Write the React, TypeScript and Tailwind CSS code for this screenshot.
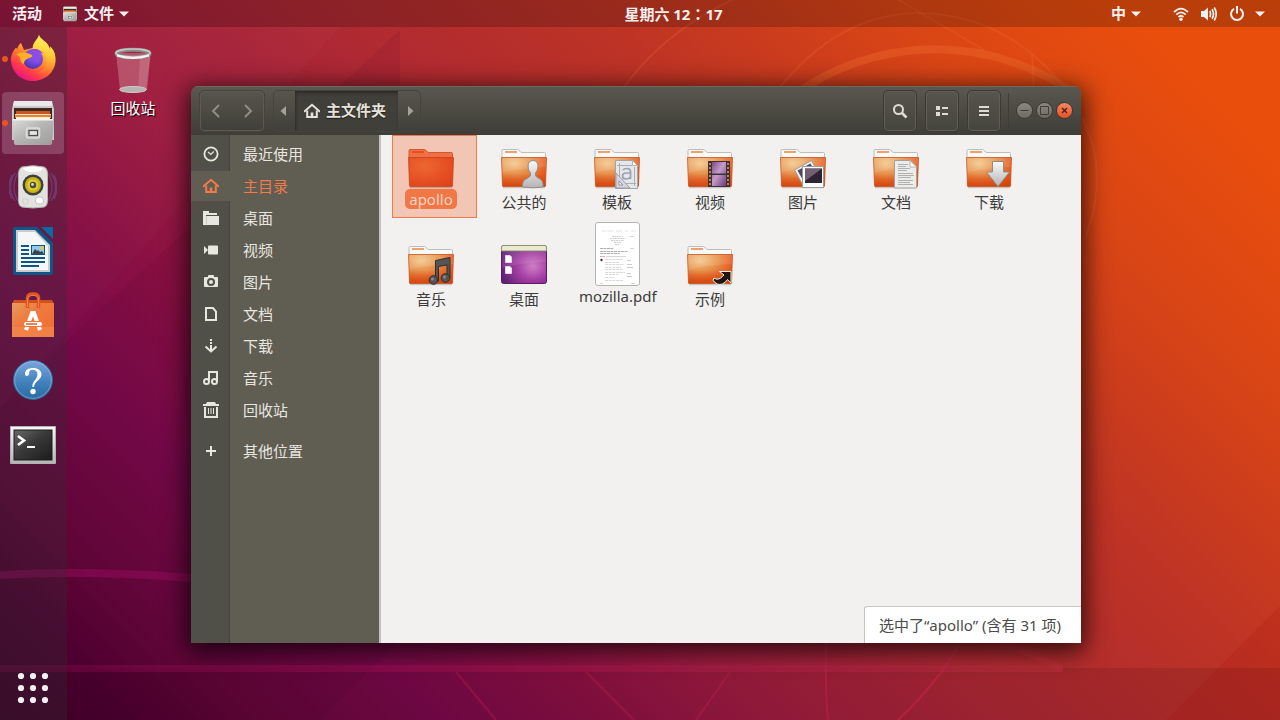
import type { ReactNode } from "react";

const FONT = "font-['Noto_Sans','Noto_Sans_CJK_SC',sans-serif]";

function SharedDefs() {
  return (
    <svg className="absolute size-0" aria-hidden="true">
      <defs>
        <radialGradient id="folderFront" cx="0.28" cy="0.22" r="0.95">
          <stop offset="0" stopColor="#f5d096" />
          <stop offset="0.4" stopColor="#e89a52" />
          <stop offset="0.72" stopColor="#e9662d" />
          <stop offset="1" stopColor="#d9480f" />
        </radialGradient>
        <linearGradient id="folderShade" x1="0" y1="0" x2="0" y2="1">
          <stop offset="0" stopColor="#d9480f" stopOpacity="0" />
          <stop offset="0.55" stopColor="#d9480f" stopOpacity="0.15" />
          <stop offset="1" stopColor="#cf430c" stopOpacity="0.8" />
        </linearGradient>
        <radialGradient id="folderSelected" cx="0.35" cy="0.3" r="0.9">
          <stop offset="0" stopColor="#ec6732" />
          <stop offset="0.5" stopColor="#e75225" />
          <stop offset="1" stopColor="#dd3f17" />
        </radialGradient>
        <linearGradient id="silver" x1="0" y1="0" x2="0" y2="1">
          <stop offset="0" stopColor="#fafafa" />
          <stop offset="1" stopColor="#b4b4b4" />
        </linearGradient>
        <linearGradient id="cabinet" x1="0" y1="0" x2="1" y2="1">
          <stop offset="0" stopColor="#dcdcda" />
          <stop offset="0.5" stopColor="#b4b4b2" />
          <stop offset="1" stopColor="#9c9c9a" />
        </linearGradient>
        <linearGradient id="film" x1="0" y1="0" x2="1" y2="1">
          <stop offset="0" stopColor="#7b4a86" />
          <stop offset="0.45" stopColor="#c49ccb" />
          <stop offset="1" stopColor="#6d3a78" />
        </linearGradient>
        <radialGradient id="desk" cx="0.7" cy="0.55" r="0.75">
          <stop offset="0" stopColor="#cf7fc4" />
          <stop offset="0.45" stopColor="#a63fa6" />
          <stop offset="1" stopColor="#5c1f6e" />
        </radialGradient>
      </defs>
    </svg>
  );
}

function Wallpaper() {
  return (
    <svg
      className="pointer-events-none absolute inset-0 size-full"
      viewBox="0 0 1280 720"
      preserveAspectRatio="none"
      fill="none"
      aria-hidden="true"
    >
      <defs>
        <linearGradient id="beam" gradientUnits="userSpaceOnUse" x1="0" y1="0" x2="1063" y2="0">
          <stop offset="0" stopColor="#8c0b50" stopOpacity="0.3" />
          <stop offset="0.35" stopColor="#a00c50" stopOpacity="0.5" />
          <stop offset="0.7" stopColor="#b01e48" stopOpacity="0.6" />
          <stop offset="1" stopColor="#b82e36" stopOpacity="0.7" />
        </linearGradient>
      </defs>
      <path d="M0 408 340 27H0z" fill="#ffffff" fillOpacity="0.015" />
      <path d="M68 340 400 30V640L320 720H0V408z" fill="#3a0026" fillOpacity="0.08" />
      <path d="M0 668h1280v52H0z" fill="#200010" fillOpacity="0.12" />
      <path d="m1280 606-114 114h114z" fill="#a00000" fillOpacity="0.12" />
      <path d="M0 575Q90 570 191 578" stroke="#8b0a54" strokeOpacity="0.65" strokeWidth="8" />
      <path d="M0 669V665H1063V672H0z" fill="url(#beam)" />
      <path d="M990 637 1062 668" stroke="#c0303c" strokeOpacity="0.4" strokeWidth="7" />
      <path d="M790 98A240 240 0 0 1 1080 98" stroke="#ee6d30" strokeOpacity="0.38" strokeWidth="8" />
      <g stroke="#f07040" strokeOpacity="0.22" strokeWidth="2">
        <path d="M776 92Q838 13 920 13 1010 15 1068 92" />
        <path d="M622 90Q662 32 740-4" />
        <path d="M892-4 984 50" />
        <path d="M1032 54 1034 90" />
        <path d="M1082 118Q1110 170 1086 236" />
      </g>
      <g stroke="#c82850" strokeOpacity="0.3" strokeWidth="2">
        <path d="M826 643Q825 690 828 720" strokeOpacity="0.4" />
        <path d="M960 643Q940 680 898 720" strokeOpacity="0.5" />
        <path d="M456 672 496 720" />
        <path d="M586 672 634 720" />
        <path d="M730 672 696 720" />
      </g>
    </svg>
  );
}

function FirefoxIcon() {
  return (
    <svg viewBox="0 1 48 48" className="size-12" aria-hidden="true">
      <defs>
        <linearGradient id="ffBody" x1="0.85" y1="0.1" x2="0.3" y2="1">
          <stop offset="0" stopColor="#fff44f" />
          <stop offset="0.3" stopColor="#ffbd33" />
          <stop offset="0.55" stopColor="#ff7a2a" />
          <stop offset="0.8" stopColor="#ff3550" />
          <stop offset="1" stopColor="#e31587" />
        </linearGradient>
        <radialGradient id="ffGlobe" cx="0.65" cy="0.25" r="0.8">
          <stop offset="0" stopColor="#a55bf0" />
          <stop offset="0.6" stopColor="#7048dc" />
          <stop offset="1" stopColor="#4a35a8" />
        </radialGradient>
        <linearGradient id="ffFlame" x1="0" y1="0" x2="0" y2="1">
          <stop offset="0" stopColor="#fff35a" />
          <stop offset="0.5" stopColor="#ffd23c" />
          <stop offset="1" stopColor="#ff7a33" stopOpacity="0.5" />
        </linearGradient>
      </defs>
      <path
        d="M30 1C29 5 24 8 23.500 14L15 16 12 9C9 11 8.500 14 8.500 15L7 13.500C3 18 1.500 23 2 27 3 39 12 47 24 47S46 38 46.500 27C46.500 19 44 15 41 12.500L41.500 16 39 11C37 7 31 5 30 1z"
        fill="url(#ffBody)"
      />
      <path
        d="M30 1C29 6 24 8 24 14L34 17C40 24 37 36 29 39 38 40 46 34 46.500 25 46.500 19 44 15 41 12.500L41.500 16 39 11C37 7 31 6 30 1z"
        fill="url(#ffFlame)"
        fillOpacity="0.85"
      />
      <circle cx="24" cy="25" r="10" fill="url(#ffGlobe)" />
      <path
        d="M7 20Q11 18.500 15 18.500 18 18 20.500 20L24 21C23 24 19 24 18 25 15.500 26 15 28 15 30 12 29 11 26 11 23z"
        fill="#ffb02a"
      />
      <path d="M20 17C26 13 32 16 34 20 33 19 30 17.500 28 18 31 21 32 26 29 30" fill="#8c4ae6" />
    </svg>
  );
}

function CabinetIcon({ className }: { className: string }) {
  return (
    <svg viewBox="0 0 48 48" className={className} aria-hidden="true">
      <path d="M5 2h38l2 8v31H3V10z" fill="#c9c9c7" />
      <path d="M5 2h38v5H4z" fill="#e9e9e7" />
      <path d="M5 9h38v14H5z" fill="#3a2a22" />
      <path d="M7 12h34v3H7z" fill="#c8571d" />
      <path d="M6 15h36v2H6z" fill="#f0e0cc" />
      <path d="M6 16h36v3H6z" fill="#e8802e" />
      <path d="M7 18h34v2H7z" fill="#fff0dc" />
      <path d="M3 20h42l-2 24q0 2-2 2H7q-2 0-2-2z" fill="url(#cabinet)" />
      <path d="M4 20h40v1.500H4z" fill="#f4f4f2" />
      <rect x="17.500" y="29" width="13" height="10" rx="1.500" fill="#c4c4c2" stroke="#dcdcda" strokeWidth="1.500" />
      <rect x="20" y="31.500" width="8.500" height="5" fill="#e6e6e4" stroke="#4a4a48" strokeWidth="1.200" />
    </svg>
  );
}

function SpeakerIcon() {
  return (
    <svg viewBox="0 0 48 48" className="size-12" fill="none" aria-hidden="true">
      <g stroke="#6d7fc8" strokeOpacity="0.35" strokeWidth="1.300">
        <path d="M6 10Q-3 24 6 38M9 10Q1 24 9 38M3 12Q-3 24 3 36" />
        <path d="M42 10Q51 24 42 38M39 10Q47 24 39 38M45 12Q51 24 45 36" />
      </g>
      <path d="M13 4Q24 1.500 35 4 38.500 5 38.500 12V37Q38.500 43 35 44 24 46 13 44 9.500 43 9.500 37V12Q9.500 5 13 4z" fill="#e2e2de" stroke="#b4b4b0" />
      <path d="M14 5Q24 2 34 5 33 9 24 9T14 5z" fill="#ffffff" />
      <circle cx="24" cy="22" r="10.500" fill="#3e4042" />
      <circle cx="24" cy="22" r="8" fill="#c9b414" />
      <circle cx="24" cy="22" r="5.500" fill="#dfcd35" />
      <circle cx="24" cy="22" r="3.200" fill="#4a4a40" />
      <circle cx="23.500" cy="21.500" r="1.400" fill="#d8d8d0" />
      <rect x="26.500" y="34" width="8" height="7" rx="3" fill="#fbfbfa" stroke="#b9b9b6" strokeWidth="0.800" />
      <rect x="14" y="36" width="5" height="5" rx="1" stroke="#d0d0cc" />
    </svg>
  );
}

function WriterIcon() {
  return (
    <svg viewBox="0 0 48 48" className="size-12" aria-hidden="true">
      <path d="M6 0h22l16 16v30q0 2-2 2H6q-2 0-2-2V2q0-2 2-2z" fill="#0c5788" />
      <path d="M32 0h12v12z" fill="#0a6aa6" />
      <path d="M7 3h19l15 15v27H7z" fill="#c9cbcc" />
      <path d="M9 5h17l13 14v24H9z" fill="#f5f6f7" />
      <path d="M12 18h8v2h-8zm0 4h8v2h-8zm0 4h8v2h-8zm0 4h24v2H12zm0 4h24v2H12zm0 4h18v2H12z" fill="#0e5686" />
      <path d="M22 18h14v10H22z" fill="#0e5686" />
      <path d="M23 19h12v8H23z" fill="#8ccbf0" />
      <circle cx="33" cy="21" r="2" fill="#e8c35a" />
      <path d="m23 27 3-5 2 2 1-1 2 2 2-1 2 3z" fill="#39434a" />
    </svg>
  );
}

function SoftwareIcon() {
  return (
    <svg viewBox="0 -1 48 48" className="size-12" fill="none" aria-hidden="true">
      <defs>
        <linearGradient id="bag" x1="0" y1="0" x2="1" y2="1">
          <stop offset="0" stopColor="#e89a5c" />
          <stop offset="0.4" stopColor="#ef7a3e" />
          <stop offset="1" stopColor="#ee6c32" />
        </linearGradient>
      </defs>
      <path d="M5 8h38l2 4H3z" fill="#d0501c" />
      <path d="M3 11h42v34H3z" fill="url(#bag)" />
      <path d="M3 35h42v10H3z" fill="#f28a52" fillOpacity="0.6" />
      <path d="M18.500 16V6q0-4 5.500-4t5.500 4v10" stroke="#e0561f" strokeWidth="3.500" />
      <path d="M18.500 15V7q0-3.500 5.500-3.500T29.500 7v8" stroke="#f08050" strokeWidth="1" />
      <path d="m17 38 6-17h2l6 17" stroke="#ffffff" strokeWidth="4" />
      <rect x="14.500" y="29.500" width="19" height="5" rx="2.500" fill="#ffffff" stroke="#ee7438" />
      <path d="M17 32h11" stroke="#e05a20" strokeWidth="1.500" />
    </svg>
  );
}

function HelpIcon() {
  return (
    <svg viewBox="0 -1 48 48" className="size-12" fill="none" aria-hidden="true">
      <defs>
        <linearGradient id="help" x1="0" y1="0" x2="0" y2="1">
          <stop offset="0" stopColor="#7ba5dc" />
          <stop offset="0.6" stopColor="#3d7fba" />
          <stop offset="1" stopColor="#2b6a9e" />
        </linearGradient>
      </defs>
      <circle cx="24" cy="24" r="19.500" fill="url(#help)" stroke="#2f6795" />
      <circle cx="24" cy="24" r="18.300" stroke="#a6c8ea" strokeOpacity="0.5" />
      <path
        d="M16 18C16 14 19.500 12 24 12 29 12 32.500 14.500 32.500 18.500 32.500 24 25.500 25 25 31H23.300C23 25 28.500 23.500 28.500 18.500 28.500 15.500 26.500 13.800 23.800 13.800 21.500 13.800 20 15 20.300 16.500 20.800 20.500 16 21 16 18z"
        fill="#ffffff"
      />
      <circle cx="24" cy="35.500" r="2.700" fill="#ffffff" />
    </svg>
  );
}

function TerminalIcon() {
  return (
    <svg viewBox="0 -2 48 48" className="size-12" fill="none" aria-hidden="true">
      <defs>
        <linearGradient id="term" x1="0" y1="0" x2="1" y2="1">
          <stop offset="0" stopColor="#6a6a6a" />
          <stop offset="0.45" stopColor="#3a3a3a" />
          <stop offset="1" stopColor="#1a1a1a" />
        </linearGradient>
      </defs>
      <rect x="1" y="5" width="46" height="38" rx="1.500" fill="url(#silver)" />
      <rect x="1.500" y="5.500" width="45" height="37" rx="1" stroke="#b0b0ac" />
      <rect x="5" y="9" width="38" height="30" fill="url(#term)" stroke="#1c1c1c" />
      <path d="m9 15 6 4.500L9 24" stroke="#ffffff" strokeWidth="2.600" />
      <path d="M18 26h8" stroke="#ffffff" strokeWidth="2" />
    </svg>
  );
}

function DesktopTrashIcon() {
  return (
    <svg viewBox="0 0 48 48" className="size-12" fill="none" aria-hidden="true">
      <path d="M7 6 11 43Q24 48 37 43L41 6Z" fill="#e0a8b0" fillOpacity="0.36" />
      <path d="M31 10 29 43 37 42 41 8z" fill="#ffffff" fillOpacity="0.12" />
      <path d="M41 8 37.500 43" stroke="#ffffff" strokeOpacity="0.25" />
      <ellipse cx="24" cy="42.500" rx="13.500" ry="3" fill="#b9b4b4" stroke="#cfcccc" />
      <ellipse cx="24" cy="6.500" rx="16.500" ry="3.800" stroke="#8a8a88" strokeWidth="4" />
      <ellipse cx="24" cy="6" rx="17" ry="4" stroke="#c9c9c7" strokeWidth="1.700" />
      <path d="M8 8.500Q24 13.500 40 8.500" stroke="#f4f4f2" strokeWidth="2" />
    </svg>
  );
}

function Folder({ children, selected = false }: { children?: ReactNode; selected?: boolean }) {
  return (
    <svg viewBox="0 0 48 44" className="mt-[9px] h-11 w-12" fill="none" aria-hidden="true">
      <path d="M3 42.500h42" stroke="#000000" strokeOpacity="0.18" strokeWidth="1.500" />
      <path
        d="M2 13V5.500q0-1 1-1h14.500q1 0 2 1.500T22 7.500h22.500q1 0 1 1V13z"
        fill={selected ? "#ee7044" : "#f9f9f8"}
        stroke={selected ? "#d8582c" : "#bdbdbb"}
      />
      <path d="M5 7h12" stroke={selected ? "#e84f1c" : "#f0a070"} strokeWidth="2" />
      <path d="M1.500 12.500h45L45.500 41q0 .5-1 .5h-41q-1 0-1-.5z" fill={selected ? "url(#folderSelected)" : "url(#folderFront)"} />
      {!selected && (
        <>
          <path d="M1.500 12.500h45L45.500 41q0 .5-1 .5h-41q-1 0-1-.5z" fill="url(#folderShade)" />
          <path d="M2 13h44v9Q20 23 2 28z" fill="#ffffff" fillOpacity="0.1" />
        </>
      )}
      <path d="M1.500 12.500h45L45.500 41q0 .5-1 .5h-41q-1 0-1-.5z" stroke={selected ? "#c8431b" : "#c9581f"} strokeOpacity="0.8" />
      {children}
    </svg>
  );
}

const personEmblem = (
  <g fill="url(#silver)" stroke="#8e8e8e">
    <path d="M22.500 42Q22 35 27 33.500L30.500 31V28Q28 25 28 21 28.500 15.500 33 15.500T38 21Q38 25 35.500 28v3L39 33.500Q43.500 35 43 42 33 43.500 22.500 42z" />
  </g>
);

const templateEmblem = (
  <g>
    <path d="M22.500 15.500h17l5 5v23h-22z" fill="#e6e7e9" stroke="#a4a4a6" />
    <path d="M39.500 15.500v5h5z" fill="#ffffff" stroke="#b4b4b4" />
    <path d="M26.500 18v20M41.500 22v19M24 20.500h15M30 38.500h13" stroke="#a9adb8" />
    <path d="M30 25q1-1.500 4-1.500 3.500 0 3.500 3V34M37.500 28H33q-3.500 0-3.500 3t3.500 3q3 0 4.500-2" stroke="#9aa1b4" strokeWidth="1.700" />
    <path d="M23 28 37 43H23z" fill="#d4d6dc" stroke="#9a9fae" />
    <path d="m26 36 4 4h-4z" fill="#ffffff" stroke="#8a90a0" />
  </g>
);

const filmEmblem = (
  <g>
    <path d="M22 16h22v26H22z" fill="#3a3336" />
    <path d="M26 17h14v11.500H26zm0 13h14v11H26z" fill="url(#film)" />
    <path d="M24 18v23M42 18v23" stroke="#e88a50" strokeWidth="1.700" strokeDasharray="2 2" />
  </g>
);

const photosEmblem = (
  <g>
    <path d="m15.500 25 17-9.500L42 33l-17 9z" fill="#f2f2f2" stroke="#9c9c9c" />
    <path d="m18.500 25.500 13-7L37 29l-12 8z" fill="#54445c" />
    <path d="M23.500 21.500h21v21h-21z" fill="#fbfbfb" stroke="#9c9c9c" />
    <path d="M26 23.500h17V38H26z" fill="#2c2433" />
    <path d="M26 23.500h17L26 36z" fill="#8a7488" fillOpacity="0.75" />
  </g>
);

const documentEmblem = (
  <g>
    <path d="M22.500 15.500H38l6.500 6.500v21h-22z" fill="#ececea" stroke="#a0a09e" />
    <path d="M38 15.500V22h6.500z" fill="#ffffff" stroke="#b4b4b2" />
    <path
      d="M26 19.500h10M26 21.500h8M26 23.500h12M26 25.500h9M26 28.500h15M26 30.500h16M26 32.500h13M26 35.500h15M26 37.500h12M26 39.500h15"
      stroke="#b0b0ae"
    />
  </g>
);

const downloadEmblem = <path d="M27.500 16.500h11v10.500h6L33 41.500 21.500 27h6z" fill="url(#silver)" stroke="#8c8c8c" />;

const musicEmblem = (
  <g fill="#555555" stroke="#2e2e2e">
    <path d="M28.500 18.500 43 15.500V36h-3V23l-8.500 1.500V39h-3z" />
    <circle cx="26.500" cy="38" r="4.300" />
    <circle cx="38.500" cy="36" r="4.300" />
    <circle cx="25.500" cy="37" r="1.500" fill="#8a8a8a" stroke="none" />
    <circle cx="37.500" cy="35" r="1.500" fill="#8a8a8a" stroke="none" />
  </g>
);

const linkEmblem = (
  <path
    d="M33.500 29.500H45V41l-3.500-3.500Q37 44 31 42L27 38.500 28 36q4 3 8.500-1.500L38 33z"
    fill="#1c1715"
    stroke="#f6efe9"
    strokeWidth="1"
  />
);

function DesktopFolder() {
  return (
    <svg viewBox="0 0 48 44" className="mt-[9px] h-11 w-12" fill="none" aria-hidden="true">
      <rect x="1.500" y="3.500" width="45" height="38" rx="2" fill="url(#desk)" stroke="#5b1a66" />
      <path d="M1.500 9V5q0-1.500 1.500-1.500h42q1.500 0 1.500 1.500v4z" fill="#e9ead2" stroke="#8f9070" />
      <path d="M2 10h44v10Q20 21 2 26z" fill="#ffffff" fillOpacity="0.1" />
      <path d="M5.500 13.500H10l1.500 1.500v5.500h-6zM5.500 24.500H10l1.500 1.500v5.500h-6z" fill="#ffffff" stroke="#e4d2ea" />
    </svg>
  );
}

function PdfThumbnail() {
  return (
    <svg viewBox="0 0 48 64" className="mt-[3px] h-16 w-12" fill="none" aria-hidden="true">
      <rect x="1.500" y="0.500" width="44" height="63" rx="2.500" fill="#ffffff" stroke="#b4b4b0" />
      <path d="M8 9h4M13 9h6M22 9h6M31 9h3M37 9h3M41 9h1" stroke="#e2e2e2" />
      <g strokeWidth="0.800">
        <path d="M18 14.500h11M16 16.500h15M17 18.500h13M20 20.500h7M21 22.500h5" stroke="#c4c4c4" strokeDasharray="2 0.500" />
        <path d="M36 14.500h4" stroke="#c9c9c9" />
        <path d="M6 26.500h14M6 29.500h28M6 31.500h20" stroke="#9c9c9c" strokeDasharray="3 0.500" />
        <path d="M36 26.500h4M12 34.500h20" stroke="#cccccc" />
        <path d="M6 34.500h5" stroke="#d99a9a" />
        <path
          d="M11 37.500h18M11 40.500h14M11 42.500h19M11 45.500h16M11 47.500h18M11 50.500h20M11 52.500h13M11 55.500h9M11 58.500h18"
          stroke="#cfcfcf"
          strokeDasharray="3 0.700"
        />
        <path d="M33 38.500h4M33 42.500h5M33 45.500h6M33 51.500h4M33 54.500h5" stroke="#bcbcbc" />
        <path d="M6 61.500h3M37 61.500h4" stroke="#cfcfcf" />
      </g>
      <circle cx="7.500" cy="38" r="1.200" fill="#5a2a28" />
    </svg>
  );
}

function HomeGlyph() {
  return (
    <svg viewBox="0 0 16 16" className="size-4" fill="none" stroke="currentColor" strokeWidth="2" aria-hidden="true">
      <path d="M0 8.700 8 1.800l8 6.900" />
      <path d="M3.200 7.500V14h9.600V7.500" />
      <path d="M8 9.500V14" strokeWidth="2.600" />
    </svg>
  );
}

const placeIcons: Record<string, ReactNode> = {
  recent: (
    <>
      <circle cx="8" cy="8" r="6.600" fill="none" stroke="currentColor" strokeWidth="1.800" />
      <path d="m5 6 2.800 2.500 3-3" fill="none" stroke="currentColor" strokeWidth="1.200" />
    </>
  ),
  desktop: <path d="M0 1h6v2h8v2H3v9H0zM4 6h12v9H0v-1h3.200V6z" />,
  video: <path d="M6 3.500h8q1 0 1 1v7q0 1-1 1H6q-1 0-1-1v-7q0-1 1-1zM1 4l4 4-4 4z" />,
  picture: (
    <path
      fillRule="evenodd"
      d="M5 3V2q0-1 1-1h4q1 0 1 1v1h3q1 0 1 1v8q0 1-1 1H2q-1 0-1-1V4q0-1 1-1zM8 4a4 4 0 1 0 0 8 4 4 0 0 0 0-8zm0 2a2 2 0 1 1 0 4 2 2 0 0 1 0-4z"
    />
  ),
  document: <path d="M3 2h7l3 3.500V14H3z" fill="none" stroke="currentColor" strokeWidth="2" />,
  download: (
    <>
      <path d="M7 1h2v2H7zm0 3h2v2H7zm0 3h2v5H7z" />
      <path d="m2.500 8.500 5.500 5 5.500-5" fill="none" stroke="currentColor" strokeWidth="2" />
    </>
  ),
  music: (
    <g fill="none" stroke="currentColor" strokeWidth="2">
      <path d="M6 11.500V2h8v9.500" />
      <circle cx="3.500" cy="11.500" r="2.500" />
      <circle cx="11.500" cy="11.500" r="2.500" />
    </g>
  ),
  trash: (
    <>
      <path d="M0 2h3l1-2h8l1 2h3v2H0z" />
      <path d="M2 5v10h12V5" fill="none" stroke="currentColor" strokeWidth="2" />
      <path d="M5.500 6v6M8 6v6M10.500 6v6" stroke="currentColor" strokeWidth="1" />
    </>
  ),
  plus: <path d="M7 3h2v4h4v2H9v4H7V9H3V7h4z" />,
};

const places = [
  { icon: "recent", label: "最近使用" },
  { icon: "home", label: "主目录", active: true },
  { icon: "desktop", label: "桌面" },
  { icon: "video", label: "视频" },
  { icon: "picture", label: "图片" },
  { icon: "document", label: "文档" },
  { icon: "download", label: "下载" },
  { icon: "music", label: "音乐" },
  { icon: "trash", label: "回收站" },
];

function Place({ icon, label, active = false }: { icon: string; label: string; active?: boolean }) {
  return (
    <a href="#" aria-current={active ? "page" : undefined} className={`flex h-8 items-center ${active ? "text-[#f27a4b]" : "text-[#e8e6e0]"}`}>
      <span className={`flex h-[30px] w-[39px] items-center justify-center ${active ? "bg-[#605e52]" : ""}`}>
        {icon === "home" ? (
          <HomeGlyph />
        ) : (
          <svg viewBox="0 0 16 16" className="size-4" fill="currentColor" aria-hidden="true">
            {placeIcons[icon]}
          </svg>
        )}
      </span>
      <span className="pl-[13px]">{label}</span>
    </a>
  );
}

const files: { label: string; icon: ReactNode; selected?: boolean; latin?: boolean }[] = [
  { label: "apollo", icon: <Folder selected />, selected: true, latin: true },
  { label: "公共的", icon: <Folder>{personEmblem}</Folder> },
  { label: "模板", icon: <Folder>{templateEmblem}</Folder> },
  { label: "视频", icon: <Folder>{filmEmblem}</Folder> },
  { label: "图片", icon: <Folder>{photosEmblem}</Folder> },
  { label: "文档", icon: <Folder>{documentEmblem}</Folder> },
  { label: "下载", icon: <Folder>{downloadEmblem}</Folder> },
  { label: "音乐", icon: <Folder>{musicEmblem}</Folder> },
  { label: "桌面", icon: <DesktopFolder /> },
  { label: "mozilla.pdf", icon: <PdfThumbnail />, latin: true },
  { label: "示例", icon: <Folder>{linkEmblem}</Folder> },
];

function Caret() {
  return (
    <svg viewBox="0 0 10 6" className="h-1.5 w-2.5" fill="currentColor" aria-hidden="true">
      <path d="M0 0.500h10L5 5.500z" />
    </svg>
  );
}

function TopBar() {
  return (
    <header className="relative flex h-[27px] items-center bg-black/20 pr-[15px] pl-3 text-[15px] leading-[27px] font-bold text-[#f2f0ee]">
      <div className="flex flex-1 items-center">
        <button>活动</button>
        <button className="ml-5 flex items-center">
          <CabinetIcon className="size-4" />
          <span className="pr-[5px] pl-1.5">文件</span>
          <Caret />
        </button>
      </div>
      <button className="ml-[70px]">
        星期六 12
        <span lang="ja" className="font-['Noto_Sans_CJK_JP',sans-serif]">
          ：
        </span>
        17
      </button>
      <div className="flex flex-1 items-center justify-end">
        <button className="flex items-center gap-[5px]">
          中<Caret />
        </button>
        <button aria-label="系统菜单" className="ml-8 flex items-center">
          <svg viewBox="0 0 16 16" className="size-4" fill="none" stroke="currentColor" strokeWidth="1.800" aria-hidden="true">
            <path d="M1 6.200Q8-1 15 6.200" />
            <path d="M3.300 8.700Q8 4 12.700 8.700" />
            <path d="M5.500 11Q8 8.500 10.500 11" />
            <circle cx="8" cy="13.200" r="1.700" fill="currentColor" stroke="none" />
          </svg>
          <svg viewBox="0 0 16 16" className="ml-3 size-4" fill="none" stroke="currentColor" strokeWidth="1.700" aria-hidden="true">
            <path d="M0 5h3l4-3.500v13L3 11H0z" fill="currentColor" stroke="none" />
            <path d="M8.800 5q1.500 3 0 6M11 3.300q3 4.700 0 9.400M13.200 1.500q4 6.500 0 13" />
          </svg>
          <svg viewBox="0 0 16 16" className="ml-3 size-4" fill="none" stroke="currentColor" strokeWidth="2" aria-hidden="true">
            <path d="M5 2.800A6 6 0 1 0 11 2.800" />
            <path d="M8 0v7.500" />
          </svg>
          <span className="ml-2.5">
            <Caret />
          </span>
        </button>
      </div>
    </header>
  );
}

const launchers = [
  { name: "Firefox", icon: <FirefoxIcon />, running: true },
  { name: "文件", icon: <CabinetIcon className="size-12" />, running: true, focused: true },
  { name: "Rhythmbox", icon: <SpeakerIcon /> },
  { name: "LibreOffice Writer", icon: <WriterIcon /> },
  { name: "Ubuntu 软件", icon: <SoftwareIcon /> },
  { name: "帮助", icon: <HelpIcon /> },
  { name: "终端", icon: <TerminalIcon /> },
];

function Dock() {
  return (
    <nav aria-label="Dock" className="flex w-[67px] shrink-0 flex-col bg-[#323034]/30 pt-px pb-px">
      <ul className="flex flex-col gap-0.5 px-0.5">
        {launchers.map((l) => (
          <li key={l.name} className="relative">
            <button
              aria-label={l.name}
              className={`flex size-[62px] items-center justify-center rounded-[4px] ${l.focused ? "bg-[#d8b8cc]/25" : ""}`}
            >
              {l.icon}
            </button>
            {l.running && <span className="absolute top-7 left-0 size-1.5 rounded-full bg-[#e95420]" />}
          </li>
        ))}
      </ul>
      <button aria-label="显示应用程序" className="mt-auto ml-0.5 flex size-[62px] items-center justify-center">
        <svg viewBox="0 0 32 32" className="size-8" fill="#f2f0f0" aria-hidden="true">
          {[4, 16, 28].map((y) => [4, 16, 28].map((x) => <circle key={`${x}-${y}`} cx={x} cy={y} r="3.100" />))}
        </svg>
      </button>
    </nav>
  );
}

const headerButton =
  "flex h-[42px] w-[34px] items-center justify-center rounded-[5px] border border-[#3a3933] bg-linear-to-b from-[#57554c] to-[#45443e] text-[#dfdbd2] shadow-[inset_0_0_0_1px_#605e55]";

const windowButton = "flex size-[17px] items-center justify-center rounded-full border border-[#3a3933]";

function TitleBar() {
  return (
    <div className="flex h-[49px] shrink-0 items-center bg-linear-to-b from-[#5a584f] to-[#3e3d38] px-2 shadow-[inset_0_1px_0_#6c6a60]">
      <div className="flex h-[42px] w-[66px] items-center justify-around rounded-[5px] border border-[#45443c] text-[#8f8d84] shadow-[inset_0_0_0_1px_#5c5a51]">
        <button aria-label="后退">
          <svg viewBox="0 0 16 16" className="size-4" fill="none" stroke="currentColor" strokeWidth="2" aria-hidden="true">
            <path d="M11 2 5 8l6 6" />
          </svg>
        </button>
        <button aria-label="前进">
          <svg viewBox="0 0 16 16" className="size-4" fill="none" stroke="currentColor" strokeWidth="2" aria-hidden="true">
            <path d="m5 2 6 6-6 6" />
          </svg>
        </button>
      </div>
      <div className="ml-2 flex h-[42px] items-stretch overflow-hidden rounded-[5px] border border-[#45443c] text-[#a3a198]">
        <button aria-label="上一级" className="flex w-[21px] items-center justify-center pr-[3px]">
          <svg viewBox="0 0 6 10" className="h-2.5 w-1.5" fill="currentColor" aria-hidden="true">
            <path d="M6 0v10L0.500 5z" />
          </svg>
        </button>
        <button className="flex w-[103px] items-center gap-1.5 bg-[#403f3a] pl-[9px] text-[15px] font-bold text-[#e6e2da] shadow-[inset_1px_2px_3px_#2c2b27] text-shadow-[0_1px_1px_#1f1e1b]">
          <HomeGlyph />
          主文件夹
        </button>
        <button aria-label="下一级" className="flex w-[22px] items-center justify-center pl-[3px]">
          <svg viewBox="0 0 6 10" className="h-2.5 w-1.5" fill="currentColor" aria-hidden="true">
            <path d="M0 0v10l5.500-5z" />
          </svg>
        </button>
      </div>
      <div className="ml-auto flex items-center gap-2">
        <button aria-label="搜索" className={headerButton}>
          <svg viewBox="0 0 16 16" className="size-4" fill="none" stroke="currentColor" aria-hidden="true">
            <circle cx="6.500" cy="6.500" r="4.500" strokeWidth="2" />
            <path d="m10 10 4.500 4.500" strokeWidth="2.600" />
          </svg>
        </button>
        <button aria-label="列表视图" className={headerButton}>
          <svg viewBox="0 0 16 16" className="size-4" fill="currentColor" aria-hidden="true">
            <path d="M2 3h4v4H2zm0 6h4v4H2zm6-5h6v2H8zm0 6h6v2H8z" />
          </svg>
        </button>
        <button aria-label="菜单" className={headerButton}>
          <svg viewBox="0 0 16 16" className="size-4" fill="currentColor" aria-hidden="true">
            <path d="M3 3h10v2H3zm0 4h10v2H3zm0 4h10v2H3z" />
          </svg>
        </button>
      </div>
      <div className="ml-[7px] flex h-9 items-center gap-[3px] border-l border-[#3e3d37] pl-[7px]">
        <button aria-label="最小化" className={`${windowButton} bg-linear-to-b from-[#8a887f] to-[#6c6a62]`}>
          <svg viewBox="0 0 9 9" className="size-[9px]" stroke="#403e38" aria-hidden="true">
            <path d="M0.500 4.500h8" />
          </svg>
        </button>
        <button aria-label="最大化" className={`${windowButton} bg-linear-to-b from-[#8a887f] to-[#6c6a62]`}>
          <svg viewBox="0 0 9 9" className="size-[9px]" fill="none" stroke="#403e38" aria-hidden="true">
            <path d="M0.500 0.500h8v8h-8z" />
          </svg>
        </button>
        <button aria-label="关闭" className={`${windowButton} bg-linear-to-b from-[#f58863] to-[#e5511f]`}>
          <svg viewBox="0 0 9 9" className="size-[9px]" stroke="#4a2010" strokeWidth="1.300" aria-hidden="true">
            <path d="m2 2 5 5M7 2 2 7" />
          </svg>
        </button>
      </div>
    </div>
  );
}

function FilesWindow() {
  return (
    <section
      aria-label="主文件夹"
      className="absolute top-[59px] right-[199px] bottom-[77px] left-[124px] flex flex-col overflow-hidden rounded-t-[7px] text-[15px] shadow-[0_5px_24px_4px_rgba(0,0,0,0.72)]"
    >
      <TitleBar />
      <div className="flex min-h-0 flex-1">
        <nav
          aria-label="位置"
          className="w-[190px] shrink-0 border-r-2 border-[#c4c2be] bg-[linear-gradient(to_right,#505048_38px,#45443c_38px,#45443c_39px,#605e52_39px)] pt-[3px]"
        >
          {places.map((p) => (
            <Place key={p.label} {...p} />
          ))}
          <div className="mt-[9px]">
            <Place icon="plus" label="其他位置" />
          </div>
        </nav>
        <div className="relative flex-1 overflow-hidden bg-[#f2f1ef]">
          <ul className="grid grid-cols-[repeat(auto-fill,85px)] gap-x-2 pl-[11px] text-[#3c3c3c]">
            {files.map((f) => (
              <li key={f.label} className="row-span-2 grid grid-rows-subgrid">
                <button
                  className={`row-span-2 grid grid-rows-subgrid justify-items-center border pr-[7px] ${
                    f.selected ? "border-[#ee7a4c] bg-[#f3c5b4]" : "border-transparent"
                  }`}
                >
                  <span className="self-end">{f.icon}</span>
                  <span className="min-h-7">
                    <span
                      className={`block whitespace-nowrap ${f.latin ? "leading-5" : "leading-[26px]"} ${
                        f.selected ? "rounded-[5px] bg-[#f07746] px-1 text-[#f9d3c3]" : ""
                      }`}
                    >
                      {f.label}
                    </span>
                  </span>
                </button>
              </li>
            ))}
          </ul>
          <p className="absolute right-0 bottom-0 rounded-tl-[3px] border-t border-l border-[#c6c5c3] bg-white pr-5 pl-3.5 leading-9 text-[#4c4c4c]">
            选中了“apollo” (含有 31 项)
          </p>
        </div>
      </div>
    </section>
  );
}

export default function App() {
  return (
    <div
      lang="zh-CN"
      className={`${FONT} relative flex h-screen flex-col overflow-hidden bg-[linear-gradient(45deg,#40002a_0%,#4c0030_6%,#620639_12%,#78094a_22%,#8a1043_30%,#9e1c40_38%,#ad2834_50%,#bd3325_65%,#d94515_80%,#e94e0c_92%)]`}
    >
      <SharedDefs />
      <Wallpaper />
      <TopBar />
      <div className="relative flex min-h-0 flex-1">
        <Dock />
        <main className="relative flex-1">
          <button className="mt-5 ml-9 flex w-[60px] flex-col items-center text-[15px] leading-[26px] text-white text-shadow-[1px_1px_1px_#000000]">
            <DesktopTrashIcon />
            回收站
          </button>
          <FilesWindow />
        </main>
      </div>
    </div>
  );
}
